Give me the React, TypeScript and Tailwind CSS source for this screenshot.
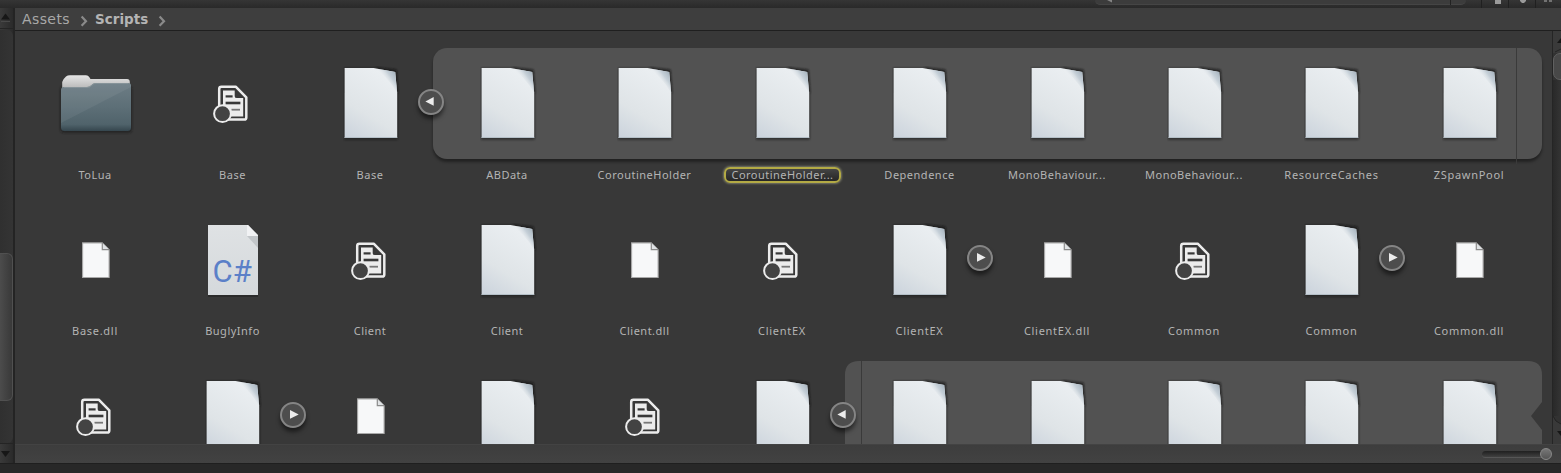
import React from "react";

type Kind = "folder" | "prefab" | "page" | "blank" | "csharp";

interface Asset {
  name: string;
  kind: Kind;
  expander?: "left" | "right";
  renaming?: boolean;
  wide?: boolean;
}

const a = (name: string, kind: Kind, extra: Partial<Asset> = {}): Asset => ({ name, kind, ...extra });

const rowOne: Asset[] = [
  a("ToLua", "folder"),
  a("Base", "prefab"),
  a("Base", "page", { expander: "left" }),
  a("ABData", "page"),
  a("CoroutineHolder", "page"),
  a("CoroutineHolder...", "page", { renaming: true }),
  a("Dependence", "page"),
  a("MonoBehaviour...", "page"),
  a("MonoBehaviour...", "page"),
  a("ResourceCaches", "page", { wide: true }),
  a("ZSpawnPool", "page", { wide: true }),
];

const rowTwo: Asset[] = [
  a("Base.dll", "blank", { wide: true }),
  a("BuglyInfo", "csharp"),
  a("Client", "prefab"),
  a("Client", "page"),
  a("Client.dll", "blank"),
  a("ClientEX", "prefab", { wide: true }),
  a("ClientEX", "page", { expander: "right", wide: true }),
  a("ClientEX.dll", "blank", { wide: true }),
  a("Common", "prefab", { wide: true }),
  a("Common", "page", { expander: "right", wide: true }),
  a("Common.dll", "blank", { wide: true }),
];

const rowThree: Asset[] = [
  a("", "prefab"),
  a("", "page", { expander: "right" }),
  a("", "blank"),
  a("", "page"),
  a("", "prefab"),
  a("", "page", { expander: "left" }),
  a("", "page"),
  a("", "page"),
  a("", "page"),
  a("", "page"),
  a("", "page"),
];

function Gradients() {
  return (
    <svg className="absolute h-0 w-0" aria-hidden="true">
      <defs>
        <linearGradient id="sheet" x1="0.1" y1="1" x2="0.55" y2="0">
          <stop offset="0" stopColor="#ccd4dd" />
          <stop offset="0.4" stopColor="#dfe4e7" />
          <stop offset="1" stopColor="#eaeef1" />
        </linearGradient>
        <linearGradient id="curl" gradientUnits="userSpaceOnUse" x1="51" y1="4" x2="40" y2="12">
          <stop offset="0" stopColor="#a6b3be" />
          <stop offset="0.5" stopColor="#c6d0d8" />
          <stop offset="1" stopColor="#e6eaed" stopOpacity="0" />
        </linearGradient>
        <linearGradient id="folderFront" x1="0" y1="0" x2="0" y2="1">
          <stop offset="0" stopColor="#6d7d85" />
          <stop offset="0.5" stopColor="#5d6f77" />
          <stop offset="0.86" stopColor="#50636b" />
          <stop offset="1" stopColor="#35464e" />
        </linearGradient>
        <linearGradient id="folderBack" x1="0" y1="0" x2="0" y2="1">
          <stop offset="0" stopColor="#e6e6e6" />
          <stop offset="0.6" stopColor="#b8b8b8" />
          <stop offset="1" stopColor="#b0b0b0" />
        </linearGradient>
        <linearGradient id="csSheet" x1="0" y1="0" x2="0" y2="1">
          <stop offset="0" stopColor="#dfe2e4" />
          <stop offset="1" stopColor="#d5d9dc" />
        </linearGradient>
        <filter id="soft" x="-20%" y="-20%" width="140%" height="140%">
          <feGaussianBlur stdDeviation="1.1" />
        </filter>
      </defs>
    </svg>
  );
}

function PageIcon() {
  return (
    <svg width="57" height="76" viewBox="-1.6 -2 57 76" className="block">
      <path d="M-.5 0H30L51.5 2 53 24V71.5H-.5Z" fill="#161616" opacity=".65" filter="url(#soft)" />
      <path d="M31 0L51 2.5 53 25" fill="none" stroke="#161616" strokeWidth="1.8" opacity=".5" filter="url(#soft)" />
      <path d="M0 0H29L50.6 4 52.6 25V70H0Z" fill="url(#sheet)" />
      <path d="M29 0L50.6 4 52.6 25Q43 8 29 0Z" fill="url(#curl)" />
      <path d="M0 69.5H52.6" stroke="#b4bfc7" strokeWidth="1" />
    </svg>
  );
}

function FolderIcon() {
  return (
    <svg width="76" height="62" viewBox="-3 -2 76 62" className="block">
      <rect x="-.5" y="11" width="71.5" height="47" rx="4" fill="#1b1b1b" opacity=".7" filter="url(#soft)" />
      <path d="M1.2 22V7Q2 4 5 1.5Q6.5 .3 9 .3H25Q27.3 .3 28.2 2L29.5 4H66Q68.8 4 68.8 7V22Z" fill="url(#folderBack)" />
      <path d="M0 15Q0 12 3 12H26Q28.5 12 30.5 10L31.5 9Q33 8 35 8H67.5Q70 8 70 10.5V52.5Q70 56 66.5 56H3.5Q0 56 0 52.5Z" fill="url(#folderFront)" />
      <path d="M3 12.5H26Q29 12.5 31 10.2T35 8.5H67.5" fill="none" stroke="#879499" strokeWidth="1" opacity=".7" />
      <path d="M0 48L70 12V10.5Q70 8 67.5 8H35Q33 8 31.5 9L30.5 10Q28.5 12 26 12H3Q0 12 0 15Z" fill="#fff" opacity=".06" />
    </svg>
  );
}

function PrefabIcon() {
  return (
    <svg width="36" height="39" viewBox="0 -0.4 36 39" className="block">
      <path
        d="M8.5 1.3H22.7L33.3 11.9V32Q33.3 34.1 31.2 34.1H8Q6.2 34.1 6.2 32V3.5Q6.2 1.3 8.5 1.3Z"
        fill="#383838"
        stroke="#ececec"
        strokeWidth="2.5"
        strokeLinejoin="round"
      />
      <path d="M10 5H21.7V10.8Q21.7 12.7 24 12.7H30.2V31H10Z" fill="#ececec" />
      <path d="M12.6 11H19.6" stroke="#383838" strokeWidth="2.2" />
      <path d="M12.6 17.6H27.4" stroke="#383838" strokeWidth="2.6" />
      <path d="M18.5 24.3H27" stroke="#777" strokeWidth="1.8" />
      <circle cx="9.5" cy="28.3" r="8.4" fill="#434343" stroke="#ececec" strokeWidth="2" />
    </svg>
  );
}

function BlankIcon() {
  return (
    <svg width="29" height="37" viewBox="0.3 0 29 37" className="block">
      <path d="M.9 .9H20.5L27.4 7.8V35.5H.9Z" fill="#f7f8f9" stroke="#a9a9a9" strokeWidth="1.1" />
      <path d="M20.6 1V7.6H27.4" fill="#e0e3e5" stroke="#8b8b8b" strokeWidth="1.2" />
    </svg>
  );
}

function CSharpIcon() {
  return (
    <svg width="52" height="72" viewBox="0 0 52 72" className="block">
      <path d="M0 71H50" stroke="#2b2b2b" strokeWidth="2" />
      <path d="M0 0H40L50 10V70H0Z" fill="url(#csSheet)" />
      <path d="M39 11L50 23V10.5Z" fill="#c2c6c9" />
      <path d="M39 0H40L50 10.5V11H39Z" fill="#f1f2f4" />
      <text x="4.6" y="57.2" fill="#5b80c8" fontSize="31" fontFamily="Roboto, sans-serif" letterSpacing="0">
        C#
      </text>
    </svg>
  );
}

function Glyph({ kind }: { kind: Kind }) {
  if (kind === "folder") return <div className="ml-[31px] pt-[7px]"><FolderIcon /></div>;
  if (kind === "prefab") return <div className="ml-[49px] pt-[19px]"><PrefabIcon /></div>;
  if (kind === "blank") return <div className="ml-[55px] pt-[19px]"><BlankIcon /></div>;
  if (kind === "csharp") return <div className="ml-[44px] pt-[2px]"><CSharpIcon /></div>;
  return <div className="ml-[41px]"><PageIcon /></div>;
}

function Expander({ dir, raised }: { dir: "left" | "right"; raised?: boolean }) {
  return (
    <div
      className={
        "absolute left-[116px] z-10 h-[26px] w-[26px] rounded-full border-2 border-[#858585] bg-[#4d4d4d] shadow-[0_4px_4px_rgba(0,0,0,0.5)] " +
        (raised ? "top-[22px]" : "top-[23px]")
      }
    >
      <svg viewBox="0 0 22 22" className="block h-[22px] w-[22px]">
        {dir === "left" ? <path d="M13.7 6V14.8L5.4 10.4Z" fill="#ececec" /> : <path d="M8 6V14.8L16.7 10.4Z" fill="#ececec" />}
      </svg>
    </div>
  );
}

function Cell({ asset, raised }: { asset: Asset; raised?: boolean }) {
  return (
    <div className="relative flex flex-col">
      <div className="h-[97px]">
        <Glyph kind={asset.kind} />
      </div>
      {asset.expander && <Expander dir={asset.expander} raised={raised} />}
      {asset.renaming ? (
        <div className="ml-[10px] mt-[4px] h-[16px] w-[117px] rounded-[6px] border-2 border-[#b3aa45] bg-linear-to-b from-[#444] to-[#262626] text-center text-[11px] leading-[11px] tracking-[0.48px] whitespace-nowrap shadow-[0_0_2px_1px_rgba(190,190,150,0.45)]">
          {asset.name}
        </div>
      ) : (
        <div
          className={
            "h-[16px] text-center text-[11px] leading-[16px] whitespace-nowrap " +
            (raised ? "mt-[3px] " : "mt-[4px] ") +
            (asset.wide ? "pr-px tracking-[0.72px]" : "pr-px tracking-[0.5px]")
          }
        >
          {asset.name}
        </div>
      )}
    </div>
  );
}

interface RowProps {
  items: Asset[];
  className: string;
  raised?: boolean;
  children?: React.ReactNode;
}

function Row({ items, className, raised, children }: RowProps) {
  return (
    <div className={"relative pl-[12px] " + className}>
      {children}
      <div className="relative grid grid-cols-[137px_138px_137px_137px_138px_137px_138px_137px_137px_138px_137px]">
        {items.map((item, i) => (
          <Cell key={i} asset={item} raised={raised} />
        ))}
      </div>
    </div>
  );
}

function Chevron() {
  return (
    <svg width="8" height="12" viewBox="0 0 8 12" className="block">
      <path d="M1.6 1.4L6 6.2 1.6 10.8" fill="none" stroke="#8a8a8a" strokeWidth="2.2" />
    </svg>
  );
}

function Toolbar() {
  return (
    <div className="flex h-[8px] shrink-0 justify-end overflow-hidden bg-linear-to-b from-[#353535] to-[#292929]">
      <div className="flex h-[5px] w-[371px] rounded-b-full border-b border-[#454545] bg-[#3c3c3c]">
        <svg width="371" height="5" viewBox="0 0 371 5">
          <path d="M12 0l5 2.4v-2.4z" fill="#858585" />
          <path d="M355.5 0V5" stroke="#222" />
        </svg>
      </div>
      <svg width="95" height="8" viewBox="0 0 95 8" className="block">
        <path d="M15.5 0V8M42.5 0V8M69.5 0V8" stroke="#202020" />
        <path d="M29 0H35V4H29Z" fill="#9a9a9a" />
        <path d="M54 0H60V1L58 3H56L54 1Z" fill="#9a9a9a" />
        <path d="M78 0H81V2H78ZM83 0H86V2H83Z" fill="#727272" />
      </svg>
    </div>
  );
}

function LeftScrollbar() {
  return (
    <div className="flex w-[15px] shrink-0 flex-col border-r-2 border-[#242424] bg-linear-to-r from-[#3a3a3a] to-[#2a2a2a]">
      <svg width="13" height="22" viewBox="0 0 13 22" className="block shrink-0">
        <path d="M1 11.5L5.5 5.5 10 11.5Z" fill="#171717" />
        <path d="M1 13.5H10" stroke="#494949" />
        <path d="M0 20.5H13" stroke="#242424" />
      </svg>
      <div className="flex h-[413px] flex-col rounded-r-[6px] bg-linear-to-r from-[#303030] to-[#343434] pt-[223px]">
        <div className="h-[148px] rounded-r-[6px] border border-l-0 border-[#505050] bg-linear-to-r from-[#4c4c4c] to-[#393939]" />
      </div>
      <svg width="13" height="20" viewBox="0 0 13 20" className="block shrink-0">
        <path d="M0 .5H13" stroke="#242424" />
        <path d="M1 8H10L5.5 14Z" fill="#171717" />
      </svg>
    </div>
  );
}

function RightScrollbar() {
  return (
    <div className="flex w-[9px] shrink-0 flex-col overflow-hidden border-l border-[#252525] bg-[#323232]">
      <svg width="8" height="22" viewBox="0 0 8 22" className="block shrink-0">
        <path d="M0 0H8V22H0Z" fill="#3a3a3a" />
        <path d="M4 12L8 7V12Z" fill="#161616" />
        <path d="M2 21L8 18" stroke="#242424" />
      </svg>
      <div className="h-[27px] w-[16px] shrink-0 rounded-[7px] border border-[#606060] bg-[#484848]" />
      <div className="grow bg-linear-to-r from-[#292929] to-[#343434]" />
      <svg width="8" height="28" viewBox="0 0 8 28" className="block shrink-0">
        <path d="M0 0Q2 6 8 8V28H0Z" fill="#393939" />
        <path d="M0 0Q2 6 8 8" stroke="#242424" fill="none" />
        <path d="M4 15H8V20Z" fill="#161616" />
      </svg>
    </div>
  );
}

export default function App() {
  return (
    <div className="flex h-[473px] w-[1561px] flex-col overflow-hidden bg-[#282828] font-['Noto_Sans',sans-serif] text-[#b4b4b4]">
      <Gradients />
      <Toolbar />
      <div className="flex h-[455px] shrink-0">
        <LeftScrollbar />
        <div className="flex min-w-0 grow flex-col">
          <div className="flex h-[23px] shrink-0 items-center border-b border-[#1f1f1f] bg-[#3e3e3e] pl-[7px] font-['DejaVu_Sans',sans-serif] text-[14px] leading-[20px]">
            <span className="w-[58px] tracking-[0.4px] text-[#a8a8a8]">Assets</span>
            <div className="mt-[3px]"><Chevron /></div>
            <span className="ml-[7px] w-[63px] text-[13.5px] font-bold">Scripts</span>
            <div className="mt-[3px]"><Chevron /></div>
          </div>
          <div className="flex h-[413px] shrink-0">
            <div className="min-w-0 grow overflow-hidden bg-[#383838] pt-[35px]">
              <Row items={rowOne} className="h-[157px]">
                <div className="absolute top-[-18px] left-[418px] flex h-[111px] w-[1109px] rounded-[14px] bg-[#525252] shadow-[0_3px_3px_rgba(0,0,0,0.4)]">
                  <div className="ml-[1083px] h-[116px] w-px bg-[#3a3a3a]" />
                </div>
              </Row>
              <Row items={rowTwo} className="h-[156px]" raised />
              <Row items={rowThree} className="h-[157px]">
                <svg className="absolute top-[-18px] left-[830px] block" width="697" height="120" viewBox="0 0 697 120">
                  <path d="M14 0H683Q697 0 697 14V41L686 55 697 69V120H0V14Q0 0 14 0Z" fill="#525252" />
                  <path d="M16.5 0V120" stroke="#3a3a3a" />
                </svg>
              </Row>
            </div>
            <RightScrollbar />
          </div>
          <div className="flex h-[19px] shrink-0 items-center justify-end border-t border-[#434343] bg-linear-to-b from-[#3d3d3d] to-[#424242] pr-[9px]">
            <div className="flex h-[7px] w-[70px] items-center justify-end rounded-full border-b border-[#565656] bg-linear-to-b from-[#202020] to-[#404040]">
              <div className="h-[12px] w-[12px] shrink-0 rounded-full border border-[#8a8a8a] bg-linear-to-b from-[#777] to-[#555]" />
            </div>
          </div>
        </div>
      </div>
      <div className="h-[10px] shrink-0 border-t border-[#1f1f1f] bg-[#282828]" />
    </div>
  );
}
